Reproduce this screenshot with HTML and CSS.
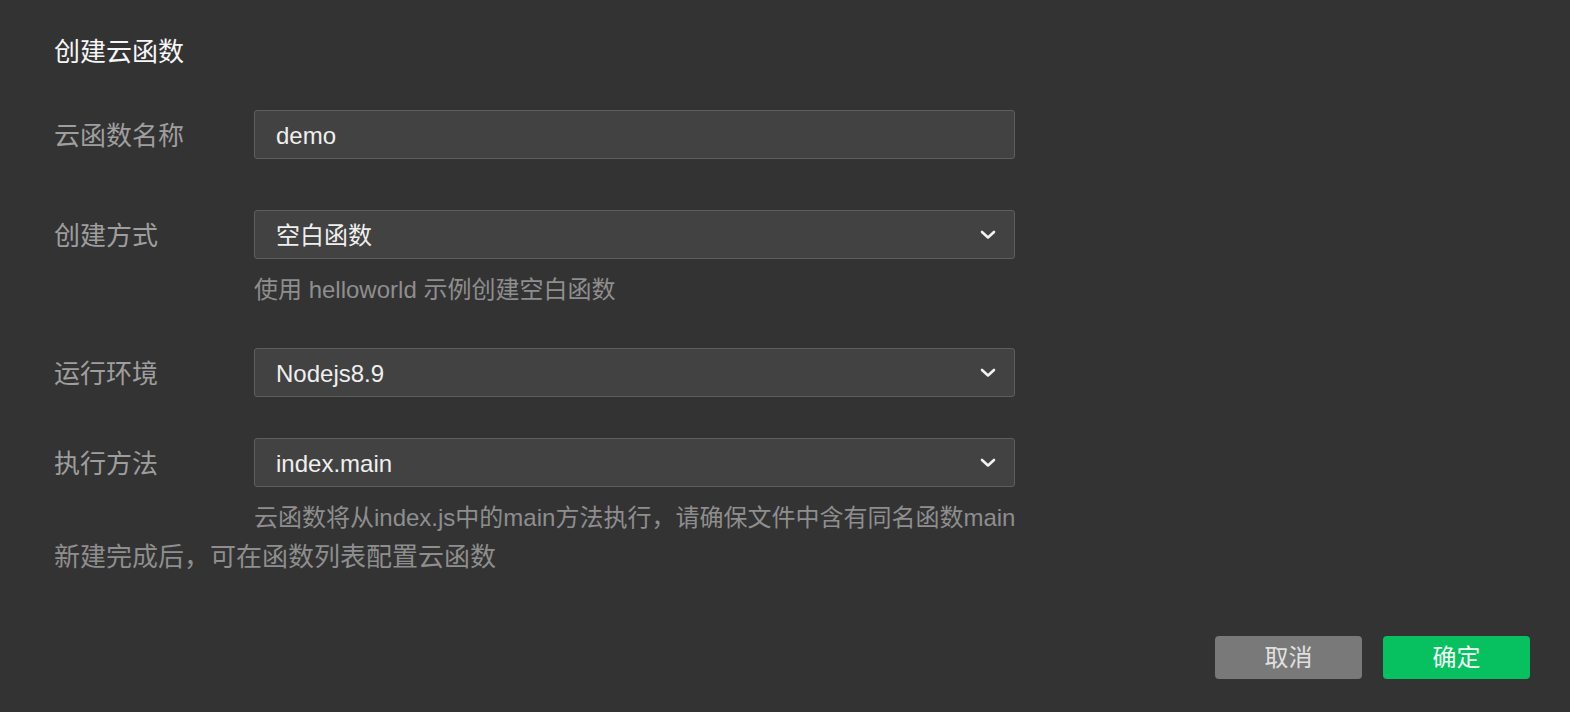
FILE: index.html
```html
<!DOCTYPE html>
<html lang="zh-CN">
<head>
<meta charset="utf-8">
<title>创建云函数</title>
<link rel="stylesheet" href="styles.css">
</head>
<body>
<div class="dialog">
  <h1 class="title">创建云函数</h1>
  <div class="form">
    <div class="row row-name">
      <label class="label">云函数名称</label>
      <div class="field">
        <div class="input">demo</div>
      </div>
    </div>
    <div class="row row-mode">
      <label class="label">创建方式</label>
      <div class="field">
        <div class="input select">空白函数<svg class="chev" width="16" height="10" viewBox="0 0 16 10"><path d="M2 2 L8 7.5 L14 2" fill="none" stroke="#f2f2f2" stroke-width="2.6" stroke-linecap="round" stroke-linejoin="round"/></svg></div>
        <div class="hint">使用 helloworld 示例创建空白函数</div>
      </div>
    </div>
    <div class="row row-env">
      <label class="label">运行环境</label>
      <div class="field">
        <div class="input select">Nodejs8.9<svg class="chev" width="16" height="10" viewBox="0 0 16 10"><path d="M2 2 L8 7.5 L14 2" fill="none" stroke="#f2f2f2" stroke-width="2.6" stroke-linecap="round" stroke-linejoin="round"/></svg></div>
      </div>
    </div>
    <div class="row row-method">
      <label class="label">执行方法</label>
      <div class="field">
        <div class="input select">index.main<svg class="chev" width="16" height="10" viewBox="0 0 16 10"><path d="M2 2 L8 7.5 L14 2" fill="none" stroke="#f2f2f2" stroke-width="2.6" stroke-linecap="round" stroke-linejoin="round"/></svg></div>
        <div class="hint">云函数将从index.js中的main方法执行，请确保文件中含有同名函数main</div>
      </div>
    </div>
  </div>
  <p class="note">新建完成后，可在函数列表配置云函数</p>
  <div class="actions">
    <button class="btn btn-cancel">取消</button>
    <button class="btn btn-ok">确定</button>
  </div>
</div>
</body>
</html>
```
FILE: styles.css
```css
html, body {
  margin: 0;
  padding: 0;
  background: #333333;
  height: 100%;
}
body {
  font-family: "Liberation Sans", "Noto Sans CJK SC", sans-serif;
  color: #e8e8e8;
}
.dialog {
  padding: 34px 40px 0 54px;
  display: flex;
  flex-direction: column;
}
.title {
  margin: 0;
  font-size: 26px;
  line-height: 36px;
  font-weight: normal;
  color: #f6f6f6;
}
.form {
  display: flex;
  flex-direction: column;
}
.row {
  display: flex;
  align-items: flex-start;
}
.row-name { margin-top: 40px; }
.row-mode { margin-top: 51px; }
.row-env { margin-top: 43px; }
.row-method { margin-top: 41px; }
.label {
  width: 200px;
  flex: none;
  font-size: 26px;
  line-height: 49px;
  padding-top: 2px;
  height: 49px;
  box-sizing: border-box;
  color: #9e9e9e;
}
.field {
  width: 761px;
  display: flex;
  flex-direction: column;
}
.input {
  box-sizing: border-box;
  height: 49px;
  border: 1px solid #5e5e5e;
  border-radius: 3px;
  background: #424242;
  padding: 2px 18px 0 21px;
  font-size: 24px;
  line-height: 45px;
  color: #efefef;
  display: flex;
  align-items: center;
  justify-content: space-between;
}
.chev {
  display: block;
  flex: none;
  margin-top: -2px;
}
.hint {
  margin-top: 16px;
  font-size: 24px;
  line-height: 30px;
  color: #8e8e8e;
  white-space: nowrap;
}
.note {
  margin: 9px 0 0;
  font-size: 26px;
  line-height: 30px;
  color: #8e8e8e;
}
.actions {
  margin-top: 64px;
  display: flex;
  justify-content: flex-end;
  gap: 21px;
}
.btn {
  width: 147px;
  height: 43px;
  border: none;
  border-radius: 4px;
  font-family: "Liberation Sans", "Noto Sans CJK SC", sans-serif;
  font-size: 24px;
  line-height: 43px;
  padding: 0;
}
.btn-cancel {
  background: #797979;
  color: #e0e0e0;
}
.btn-ok {
  background: #07c160;
  color: #f4fff8;
}
```
